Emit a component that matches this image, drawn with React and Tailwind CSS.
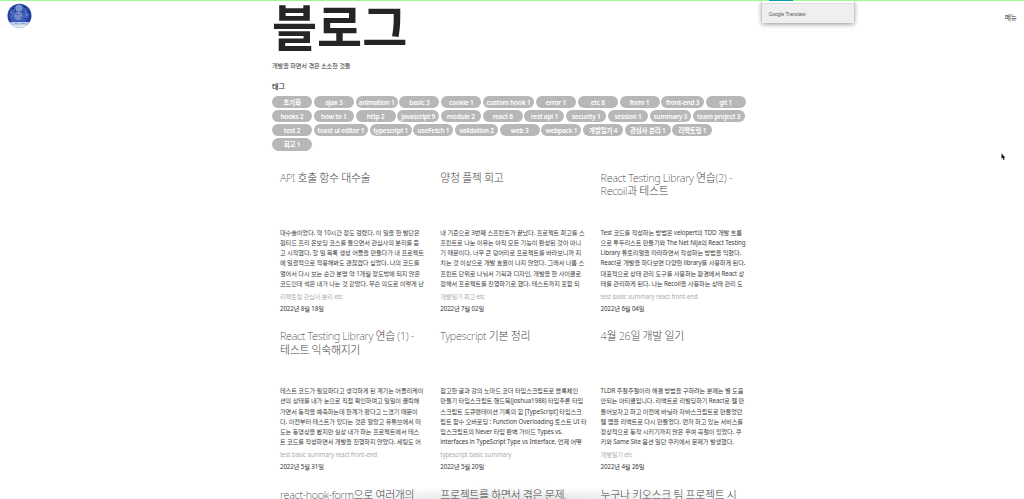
import React from "react";

const TAG_ROWS = [
  [["초기화", "w-10"], ["ajax 3", "w-10"], ["animation 1", "w-[42px]"], ["basic 3", "w-10"], ["cookie 1", "w-10"], ["custom hook 1", "w-[51px]"], ["error 1", "w-10"], ["etc 8", "w-10"], ["form 1", "w-10"], ["front-end 3", "w-[42.5px]"], ["git 1", "w-10"]],
  [["hooks 2", "w-10"], ["how to 1", "w-10"], ["http 2", "w-10"], ["javascript 9", "w-[41.5px]"], ["module 2", "w-10"], ["react 6", "w-10"], ["rest api 1", "w-10"], ["security 1", "w-10"], ["session 1", "w-10"], ["summary 3", "w-[41px]"], ["team project 3", "w-[52px]"]],
  [["test 2", "w-10"], ["toast ui editor 1", "w-[54px]"], ["typescript 1", "w-[42px]"], ["useFetch 1", "w-10"], ["validation 2", "w-[42.5px]"], ["web 3", "w-10"], ["webpack 1", "w-10"], ["개발일기 4", "w-10"], ["관심사 분리 1", "w-[45.5px]"], ["리팩토링 1", "w-10"]],
  [["회고 1", "w-10"]],
];

const POSTS = [
  {
    title: ["API 호출 함수 대수술"],
    body: ["대수술이었다. 약 10시간 정도 걸렸다. 이 일을 한 발단은", "원티드 프리 온보딩 코스를 들으면서 관심사의 분리를 듣", "고 시작했다. 할 일 목록 생성 어플을 만들다가 내 프로젝트", "에 일괄적으로 적용해봐도 괜찮겠다 싶었다. 나의 코드를", "열어서 다시 보는 순간 분명 약 1개월 정도밖에 되지 않은", "코드인데 썩은 내가 나는 것 같았다. 무슨 의도로 이렇게 난"],
    tags: "리팩토링 관심사 분리 etc",
    date: "2022년 8월 18일",
  },
  {
    title: ["양청 플젝 회고"],
    body: ["내 기준으로 3번째 스프린트가 끝났다. 프로젝트 회고를 스", "프린트로 나눈 이유는 아직 모든 기능이 완성된 것이 아니", "기 때문이다. 너무 큰 덩어리로 프로젝트를 바라보니까 지", "치는 것 이상으로 개발 효율이 나지 않았다. 그래서 나름 스", "프린트 단위로 나눠서 기획과 디자인, 개발을 한 사이클로", "정해서 프로젝트를 진행하기로 했다. 테스트까지 포함 되"],
    tags: "개발일기 회고 etc",
    date: "2022년 7월 02일",
  },
  {
    title: ["React Testing Library 연습(2) -", "Recoil과 테스트"],
    body: ["Test 코드를 작성하는 방법은 velopert의 TDD 개발 흐름", "으로 투두리스트 만들기와 The Net Nija의 React Testing", "Library 튜토리얼을 따라하면서 작성하는 방법을 익혔다.", "React로 개발을 하다보면 다양한 library를 사용하게 된다.", "대표적으로 상태 관리 도구를 사용하는 환경에서 React 상", "태를 관리하게 된다. 나는 Recoil을 사용하는 상태 관리 도"],
    tags: "test basic summary react front-end",
    date: "2022년 6월 04일",
  },
  {
    title: ["React Testing Library 연습 (1) -", "테스트 익숙해지기"],
    body: ["테스트 코드가 필요하다고 생각하게 된 계기는 어플리케이", "션의 상태를 내가 눈으로 직접 확인하며고 일일이 클릭해", "가면서 동작을 예측하는데 한계가 왔다고 느꼈기 때문이", "다. 이전부터 테스트가 있다는 것은 알았고 유튜브에서 떠", "도는 동영상을 봤지만 실상 내가 하는 프로젝트에서 테스", "트 코드를 작성하면서 개발을 진행하지 않았다. 세팅도 어"],
    tags: "test basic summary react front-end",
    date: "2022년 5월 31일",
  },
  {
    title: ["Typescript 기본 정리"],
    body: ["참고한 글과 강의 노마드 코더 타입스크립트로 블록체인", "만들기 타입스크립트 핸드북(joshua1988) 타입추론 타입", "스크립트 도큐멘테이션 기록의 힘 [TypeScript] 타입스크", "립트 함수 오버로딩 : Function Overloading 토스트 UI 타", "입스크립트의 Never 타입 완벽 가이드 Types vs.", "interfaces in TypeScript Type vs Interface, 언제 어떻"],
    tags: "typescript basic summary",
    date: "2022년 5월 20일",
  },
  {
    title: ["4월 26일 개발 일기"],
    body: ["TLDR 주절주절이라 해결 방법을 구하려는 분께는 별 도움", "안되는 아티클입니다. 리액트로 리빌딩하기 React로 웹 만", "들어보자고 하고 이전에 바닐라 자바스크립트로 만들었던", "웹 앱을 리액트로 다시 만들었다. 먼저 하고 있는 서비스를", "정상적으로 동작 시키기까지 많은 우여 곡절이 있었다. 쿠", "키와 Same Site 옵션 일단 쿠키에서 문제가 발생했다."],
    tags: "개발일기 etc",
    date: "2022년 4월 26일",
  },
  { title: ["react-hook-form으로 여러개의"] },
  { title: ["프로젝트를 하면서 겪은 문제,"] },
  { title: ["누구나 키오스크 팀 프로젝트 시"] },
];

function Post({ post }) {
  return (
    <article className="h-[158.3px] whitespace-nowrap">
      <h2 className="h-[56.5px] text-[10.9px] font-extralight leading-[13.3px] tracking-[-0.33px] text-[#444]">
        {post.title.map((line) => (
          <div key={line}>{line}</div>
        ))}
      </h2>
      {post.body && (
        <>
          <div className="text-[6.2px] leading-[10.27px] tracking-[-0.1px] text-[#3c3c3c]">
            {post.body.map((line) => (
              <p key={line}>{line}</p>
            ))}
          </div>
          <p className="mt-[1.5px] text-[6.2px] leading-3 tracking-[-0.14px] text-[#adadad]">{post.tags}</p>
          <p className="text-[6.2px] leading-3 tracking-[-0.11px] text-[#333]">{post.date}</p>
        </>
      )}
    </article>
  );
}

export default function App() {
  return (
    <div className="relative h-[499px] w-full overflow-hidden bg-white font-['Noto_Sans','Noto_Sans_CJK_KR',sans-serif] text-[#222]">
      <header className="flex h-0 justify-between">
        <svg className="ml-[7px] mt-[3px] h-[26px] w-[26px] shrink-0" viewBox="0 0 26 26">
          <defs>
            <clipPath id="logo">
              <circle cx="12.5" cy="12.7" r="12" />
            </clipPath>
          </defs>
          <g clipPath="url(#logo)">
            <rect width="26" height="26" fill="#2040a0" />
            <circle cx="12" cy="12" r="9.5" fill="#3a5ab6" />
            <circle cx="12" cy="5" r="3.5" fill="#7890d2" />
            <circle cx="11.5" cy="13" r="4.3" fill="#7088ca" />
            <path d="M3 8l4 2-2 5zM18 7l4 5-4 3z" fill="#5871bf" />
            <path d="M5 5h2v1H5zM17 4h1v1h-1zM20 9h1v1h-1zM4 11h1v1H4zM18 15h1v1h-1zM10 11h1v1h-1zM15 8h1v1h-1zM8 8h1v1H8zM14 14h1v1h-1z" fill="#14295e" />
            <path d="M0 19h26v7H0z" fill="#b9c9ec" />
            <path d="M5 22h15v4H5z" fill="#dceaf4" />
            <path d="M8 20h3v1H8zM14 20h4v1h-4z" fill="#91a8db" />
            <path d="M9 22h2v1H9zM14 21h2v1h-2z" fill="#e1e0bf" />
          </g>
        </svg>
        <span className="mr-[7px] mt-3 text-[6.7px] leading-[11px] text-[#333]">메뉴</span>
      </header>

      <main className="ml-[272px] w-[484px]">
        <h1 className="-mt-[9px] h-[69px] whitespace-nowrap font-['Noto_Sans_CJK_KR',sans-serif] text-[49px] font-bold leading-[68px] text-[#252525]">블로그</h1>
        <p className="h-[21px] text-[6.2px] leading-3 tracking-[-0.12px] text-[#333]">개발을 하면서 겪은 소소한 것들</p>
        <h3 className="h-[14.6px] text-[7px] font-medium leading-[11px]">태그</h3>
        <div className="flex h-[75.6px] flex-col gap-[1.8px]">
          {TAG_ROWS.map((row) => (
            <div key={row[0][0]} className="flex gap-[1.82px]">
              {row.map(([label, width]) => (
                <span key={label} className={`${width} h-[12.4px] shrink-0 whitespace-nowrap rounded-full bg-[#b7b7b7] text-center text-[6.5px] font-semibold leading-[13.2px] tracking-[-0.2px] text-white`}>
                  {label}
                </span>
              ))}
            </div>
          ))}
        </div>
        <div className="grid grid-cols-[repeat(3,160.3px)] pl-2">
          {POSTS.map((post) => (
            <Post key={post.title[0]} post={post} />
          ))}
        </div>
      </main>

      <div className="absolute left-[762px] top-0 h-[23px] w-[92px] bg-[#efefef] shadow-[0_1px_5px_rgba(0,0,0,0.45)]">
        <div className="h-[4px] border-b border-[#ddd] bg-white" />
        <p className="pl-[6.5px] pt-[5px] font-['Liberation_Sans',sans-serif] text-[5px] leading-[11px] tracking-[-0.06px] text-[#555]">Google Translate</p>
      </div>
      <div className="absolute inset-x-0 top-0 h-px bg-[#98fb98]" />
      <div className="absolute left-[769px] top-0 h-px w-6 bg-[#0c9bb2]" />
      <div className="absolute bottom-0 left-[270px] h-3 w-[485px] bg-[radial-gradient(ellipse_at_bottom,rgba(0,0,0,0.11),transparent_70%)]" />
      <svg className="absolute left-[1001px] top-[153px] h-[8px] w-[5px]" viewBox="0 0 5 8">
        <path d="M.5.5v5.3l1.2-1 .9 2.1 1-.4-.8-2h1.6z" fill="#111" />
      </svg>
    </div>
  );
}
